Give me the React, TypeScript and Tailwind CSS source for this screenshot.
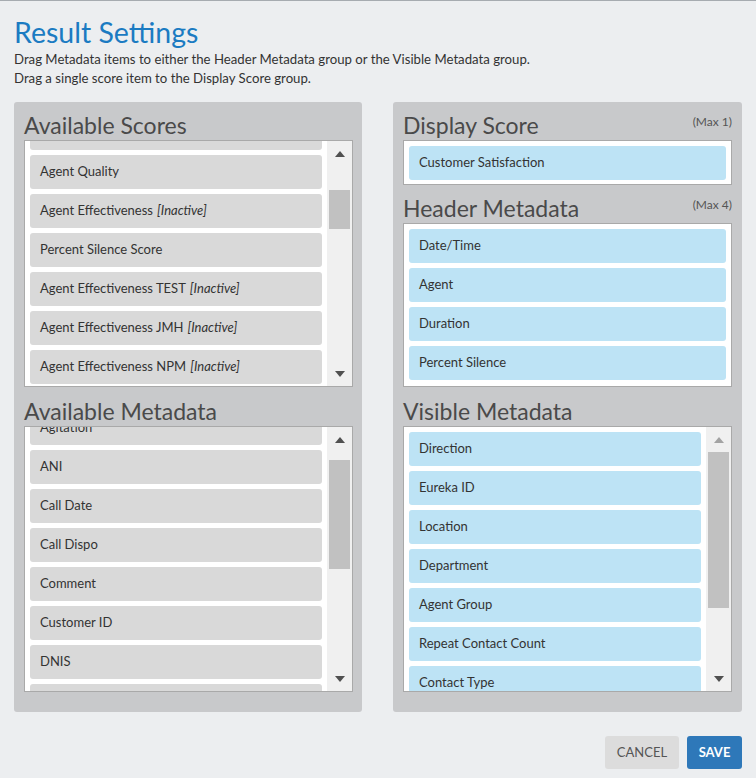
import React from 'react';

type Item = { label: string; inactive?: boolean };

const scores: Item[] = [
  { label: 'Customer Effort' },
  { label: 'Agent Quality' },
  { label: 'Agent Effectiveness', inactive: true },
  { label: 'Percent Silence Score' },
  { label: 'Agent Effectiveness TEST', inactive: true },
  { label: 'Agent Effectiveness JMH', inactive: true },
  { label: 'Agent Effectiveness NPM', inactive: true },
];

const metadata: Item[] = [
  { label: 'Agitation' },
  { label: 'ANI' },
  { label: 'Call Date' },
  { label: 'Call Dispo' },
  { label: 'Comment' },
  { label: 'Customer ID' },
  { label: 'DNIS' },
  { label: 'Extension' },
];

const visible = [
  'Direction',
  'Eureka ID',
  'Location',
  'Department',
  'Agent Group',
  'Repeat Contact Count',
  'Contact Type',
];

function Chip({ item, blue }: { item: Item; blue?: boolean }) {
  return (
    <div
      className={`flex h-[34px] shrink-0 items-center rounded-[3px] px-[10px] text-[13px] text-[#333] ${
        blue ? 'bg-[#bde3f5]' : 'bg-[#d9d9d9]'
      }`}
    >
      <span>{item.label}</span>
      {item.inactive && <span className="ml-[4px] italic">[Inactive]</span>}
    </div>
  );
}

function Scrollbar({ thumbTop, thumbHeight, upDisabled }: { thumbTop: number; thumbHeight: number; upDisabled?: boolean }) {
  return (
    <div className="flex w-[25px] shrink-0 flex-col bg-[#f0f0f0]">
      <div className="flex h-[25px] items-center justify-center">
        <svg width="10" height="6" viewBox="0 0 10 6">
          <path d="M0 6 L5 0 L10 6 Z" fill={upDisabled ? '#a3a3a3' : '#505050'} />
        </svg>
      </div>
      <div className="flex-1 px-[2px]">
        <div className="w-full bg-[#c1c1c1]" style={{ marginTop: thumbTop, height: thumbHeight }} />
      </div>
      <div className="flex h-[25px] items-center justify-center">
        <svg width="10" height="6" viewBox="0 0 10 6">
          <path d="M0 0 L10 0 L5 6 Z" fill="#505050" />
        </svg>
      </div>
    </div>
  );
}

function Heading({ title, max, tall }: { title: string; max?: string; tall?: boolean }) {
  return (
    <div className={`flex items-start justify-between ${tall ? 'h-[39px] pt-[10px]' : 'h-[38px] pt-[9px]'}`}>
      <h2 className="text-[23px] leading-[28px] text-[#4a4a4a]">{title}</h2>
      {max && <span className="pt-[2px] text-[12px] text-[#555]">{max}</span>}
    </div>
  );
}

export default function App() {
  return (
    <div className="flex min-h-[778px] w-[756px] flex-col border-t border-[#a6abb0] bg-[#eceef0] px-[14px] font-['Lato','Liberation_Sans',sans-serif]">
      <h1 className="pt-[14px] text-[28.5px] leading-[35px] text-[#1b7bc2]">Result Settings</h1>
      <p className="text-[13.2px] leading-[19px] text-[#333]">
        Drag Metadata items to either the Header Metadata group or the Visible Metadata group.
        <br />
        Drag a single score item to the Display Score group.
      </p>

      <div className="mt-[14px] grid grid-cols-[348px_349px] gap-[31px]">
        {/* left */}
        <div className="flex h-[610px] flex-col rounded-[3px] bg-[#c8c9cb] pl-[10px] pr-[9px]">
          <Heading title="Available Scores" />
          <div className="flex h-[247px] border border-[#a9a9a9] bg-white">
            <div className="flex-1 overflow-hidden pl-[5px] pr-[5px]">
              <div className="mt-[-25px] flex flex-col gap-[5px]">
                {scores.map((s) => (
                  <Chip key={s.label} item={s} />
                ))}
              </div>
            </div>
            <Scrollbar thumbTop={24} thumbHeight={39} />
          </div>
          <Heading title="Available Metadata" tall />
          <div className="flex h-[266px] border border-[#a9a9a9] bg-white">
            <div className="flex-1 overflow-hidden pl-[5px] pr-[5px]">
              <div className="mt-[-16px] flex flex-col gap-[5px]">
                {metadata.map((s) => (
                  <Chip key={s.label} item={s} />
                ))}
              </div>
            </div>
            <Scrollbar thumbTop={8} thumbHeight={109} />
          </div>
        </div>

        {/* right */}
        <div className="flex h-[610px] flex-col rounded-[3px] bg-[#c8c9cb] px-[10px]">
          <Heading title="Display Score" max="(Max 1)" />
          <div className="border border-[#a9a9a9] bg-white px-[5px] pb-[4px] pt-[5px]">
            <Chip item={{ label: 'Customer Satisfaction' }} blue />
          </div>
          <Heading title="Header Metadata" max="(Max 4)" />
          <div className="flex flex-col gap-[5px] border border-[#a9a9a9] bg-white px-[5px] pb-[6px] pt-[5px]">
            {['Date/Time', 'Agent', 'Duration', 'Percent Silence'].map((l) => (
              <Chip key={l} item={{ label: l }} blue />
            ))}
          </div>
          <Heading title="Visible Metadata" tall />
          <div className="flex h-[266px] border border-[#a9a9a9] bg-white">
            <div className="flex-1 overflow-hidden px-[5px] pt-[5px]">
              <div className="flex flex-col gap-[5px]">
                {visible.map((l) => (
                  <Chip key={l} item={{ label: l }} blue />
                ))}
              </div>
            </div>
            <Scrollbar thumbTop={0} thumbHeight={156} upDisabled />
          </div>
        </div>
      </div>

      <div className="mt-[24px] flex justify-end gap-[8px]">
        <button className="h-[33px] w-[74px] rounded-[3px] bg-[#dcdcdc] text-[13px] text-[#555]">CANCEL</button>
        <button className="h-[33px] w-[55px] rounded-[3px] bg-[#2e78b9] text-[13px] font-bold text-white">SAVE</button>
      </div>
    </div>
  );
}
